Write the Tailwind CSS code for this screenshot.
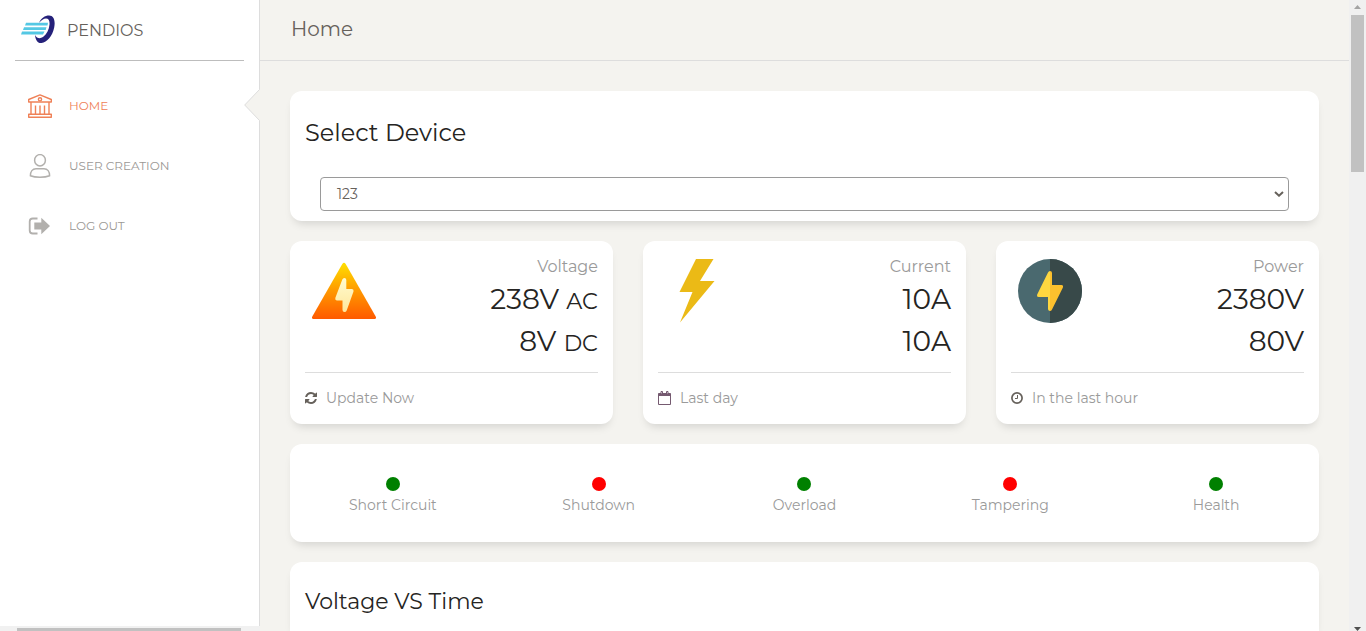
<!DOCTYPE html>
<html lang="en">
<head>
<meta charset="utf-8">
<title>Pendios</title>
<script src="https://cdn.jsdelivr.net/npm/@tailwindcss/browser@4"></script>
</head>
<body class="relative flex h-screen overflow-hidden bg-[#f4f3ef] font-[Montserrat,Inter,sans-serif] font-normal text-sm text-[#252422]">
<aside class="relative flex h-full w-[260px] shrink-0 flex-col border-r border-[#dddddd] bg-white">
  <div class="mx-[15px] flex h-[61px] w-[229px] items-center border-b border-[#bdbdbd]">
    <svg class="ml-[6px] h-[30px] w-[34px] shrink-0" viewBox="0 0 34 30">
      <path fill="#25217a" fill-rule="evenodd" d="M18 8C20 3 24 .5 28 .5c5 0 6.500 5.500 5.200 12C31.500 21 26 27.500 20.500 28c-4 .4-6-3-6.500-8 2 3.500 5 4 8 2 4-3 6-7.500 6.500-12.500.3-4-.8-6-3.500-6-2.500 0-4.500 1.500-7 4.500Z"/>
      <path fill="#54c8e4" d="M5 7.700h22l-.5 2.800H4ZM3 12.200h22.500l-.8 2.900H2ZM1 16.600h22.500l-1.500 2.900H0Z"/>
    </svg>
    <span class="ml-3 mt-[2px] text-base text-[#66615b]">PENDIOS</span>
  </div>
  <nav class="mt-[14px] flex flex-col text-xs text-[#9b9895]">
    <div class="flex h-[60px] items-center pl-[28px] text-[#ef8157]">
      <svg class="mt-px h-6 w-6" viewBox="0 0 24 24" fill="none" stroke="currentColor" stroke-width="1.400" stroke-linejoin="round"><path d="M.7 8V5.500L12 .9l11.300 4.600V8ZM3 8v12M7.500 11.500V20M12 11.500V20M16.500 11.500V20M21 8v12M.7 23.300v-3h22.600v3Z"/><circle cx="12" cy="5.300" r="1.600"/></svg>
      <span class="ml-[17px] mt-[2px]">HOME</span>
    </div>
    <div class="flex h-[60px] items-center pl-[28px]">
      <svg class="mt-px h-6 w-6" viewBox="0 0 24 24" fill="none" stroke="#b2b0ad" stroke-width="1.500"><ellipse cx="12" cy="6.300" rx="5.400" ry="5.700"/><path d="M8 14.700h8c3.500 0 5.600 3 5.600 7-5 2-14.200 2-19.200 0 0-4 2.100-7 5.600-7Z"/></svg>
      <span class="ml-[17px] mt-[2px]">USER CREATION</span>
    </div>
    <div class="flex h-[60px] items-center pl-[28px]">
      <svg class="mt-px h-6 w-6" viewBox="0 0 24 24"><path d="M9.500 4.500H4.800Q1.700 4.500 1.700 7.500v9q0 3 3.100 3h4.700" fill="none" stroke="#b2b0ad" stroke-width="1.800"/><path fill="#b2b0ad" d="M6.300 8.500h7V3.700L22 12l-8.700 8.300v-4.800h-7Z"/></svg>
      <span class="ml-[17px] mt-[2px]">LOG OUT</span>
    </div>
  </nav>
  <svg class="absolute -right-px top-[89px] h-8 w-4" viewBox="0 0 16 32"><path fill="#f4f3ef" d="M16 0 .5 16 16 32Z"/><path d="M15.500.5.700 16l14.800 15.500" fill="none" stroke="#dddddd"/></svg>
  <div class="mt-auto h-[5px] w-[260px] bg-[#f1f1f1] pl-[17px] pt-[2px]"><div class="h-[3px] w-[224px] bg-[#c1c1c1]"></div></div>
</aside>
<main class="flex h-full min-w-0 flex-1 flex-col">
  <header class="flex h-[61px] shrink-0 items-center border-b border-[#dddddd] pb-[3px] pl-[31px] text-xl text-[#66615b]">Home</header>
  <div class="flex flex-col gap-5 pl-[30px] pr-[30px] pt-[30px]">
    <section class="h-[130px] rounded-xl bg-white px-[15px] pt-[26px] shadow-[0_6px_10px_-4px_rgba(0,0,0,0.15)]">
      <h2 class="text-2xl leading-[32px]">Select Device</h2>
      <div class="mx-[15px] mt-[28px] flex h-[34px] items-center justify-between rounded border border-[#9a9a9a] pl-4 pr-[4px] text-[#66615b]">
        <span class="pb-px">123</span>
        <svg class="h-[6px] w-[10px]" viewBox="0 0 10 6" fill="none" stroke="#66615b" stroke-width="2"><path d="m1 1 4 3.700L9 1"/></svg>
      </div>
    </section>
    <div class="grid grid-cols-3 gap-[30px]">
      <section class="h-[183px] rounded-xl bg-white px-[15px] shadow-[0_6px_10px_-4px_rgba(0,0,0,0.15)]">
        <div class="flex h-[131px] justify-between pt-[15px]">
          <svg class="ml-[7px] mt-[3px] h-16 w-16" viewBox="0 0 64 64"><defs><linearGradient id="warn" x2="0" y2="1"><stop stop-color="#ffe000"/><stop offset=".5" stop-color="#ff9800"/><stop offset="1" stop-color="#ff5a00"/></linearGradient><linearGradient id="pale" x2="0" y2="1"><stop stop-color="#fffbd0"/><stop offset="1" stop-color="#ffe79c"/></linearGradient></defs><path fill="url(#warn)" d="M30.300 5q1.700-2.500 3.400 0l30 52.500q1 2.500-1.200 2.500h-61q-2.200 0-1.200-2.500Z"/><path fill="url(#pale)" d="M30.300 20.500q.6-1.500 2-1.500 2 0 2 2v9H40q2 .2 1.500 2.500l-6.800 19q-.6 1.500-2.200 1.500-2 0-2-2V41.500h-5.700q-2-.2-1.500-2.500Z"/></svg>
          <div class="text-right">
            <p class="text-base leading-[22px] text-[#9a9a9a]">Voltage</p>
            <p class="text-[28px] leading-[42px]">238V <span class="text-[22.400px] leading-none">AC</span></p>
            <p class="text-[28px] leading-[42px]">8V <span class="text-[22.400px] leading-none">DC</span></p>
          </div>
        </div>
        <div class="flex h-[51px] items-center border-t border-[#dddddd] text-[#9a9a9a]">
          <svg class="h-3 w-3" viewBox="0 0 1536 1536" fill="#66615b"><path d="M1511 928q0 5-1 7-64 268-268 434.500T764 1536q-146 0-282.500-55T238 1324l-129 129q-19 19-45 19t-45-19-19-45V960q0-26 19-45t45-19h448q26 0 45 19t19 45-19 45l-137 137q71 66 161 102t187 36q134 0 250-65t186-179q11-17 53-117 8-23 30-23h192q13 0 22.500 9.500t9.500 22.500zm25-800v448q0 26-19 45t-45 19h-448q-26 0-45-19t-19-45 19-45l138-138Q969 256 768 256q-134 0-250 65T332 500q-11 17-53 117-8 23-30 23H50q-13 0-22.500-9.500T18 608v-7q65-268 270-434.500T768 0q146 0 284 55.500T1297 212l130-129q19-19 45-19t45 19 19 45z"/></svg>
          <span class="ml-[9px] pb-px">Update Now</span>
        </div>
      </section>
      <section class="h-[183px] rounded-xl bg-white px-[15px] shadow-[0_6px_10px_-4px_rgba(0,0,0,0.15)]">
        <div class="flex h-[131px] justify-between pt-[15px]">
          <svg class="ml-[7px] mt-[3px] h-16 w-16" viewBox="0 0 64 64"><path fill="#ebba16" d="M31 0h17.500L35 22h14.500L15 63.500 27.500 33H14.500Z"/></svg>
          <div class="text-right">
            <p class="text-base leading-[22px] text-[#9a9a9a]">Current</p>
            <p class="text-[28px] leading-[42px]">10A</p>
            <p class="text-[28px] leading-[42px]">10A</p>
          </div>
        </div>
        <div class="flex h-[51px] items-center border-t border-[#dddddd] text-[#9a9a9a]">
          <svg class="h-[14px] w-[13px]" viewBox="0 0 13 14" fill="none" stroke="#755a70"><path d="M.5 3.500v10h12v-10Z"/><path fill="#755a70" d="M.5 2.500h12v2H.5Z"/><path fill="white" d="M3 .5h1.500V3H3ZM8.500.5H10V3H8.500Z"/></svg>
          <span class="ml-[9px] pb-px">Last day</span>
        </div>
      </section>
      <section class="h-[183px] rounded-xl bg-white px-[15px] shadow-[0_6px_10px_-4px_rgba(0,0,0,0.15)]">
        <div class="flex h-[131px] justify-between pt-[15px]">
          <svg class="ml-[7px] mt-[3px] h-16 w-16" viewBox="0 0 64 64"><circle cx="32" cy="32" r="32" fill="#4a696f"/><path fill="#384949" d="M32 0a32 32 0 0 1 0 64Z"/><path fill="#ffd740" d="M32 12q-1.300 0-2 1.500L19.200 35.500Q18.500 38 20.700 38H30v12.300Q30.300 52 32 52Z"/><path fill="#fcc02e" d="M32 12q2 .2 2 2v12h9.500q2.200.3 1.300 2.700L34 50.500Q33.300 52 32 52Z"/></svg>
          <div class="text-right">
            <p class="text-base leading-[22px] text-[#9a9a9a]">Power</p>
            <p class="text-[28px] leading-[42px]">2380V</p>
            <p class="text-[28px] leading-[42px]">80V</p>
          </div>
        </div>
        <div class="flex h-[51px] items-center border-t border-[#dddddd] text-[#9a9a9a]">
          <svg class="h-3 w-3" viewBox="0 0 12 12" fill="none" stroke="#66615b"><circle cx="6" cy="6" r="5.100" stroke-width="1.700"/><path d="M6.500 3v3.500H4"/></svg>
          <span class="ml-[9px] pb-px">In the last hour</span>
        </div>
      </section>
    </div>
    <section class="grid h-[98px] grid-cols-5 rounded-xl bg-white pt-[33px] text-center text-[#9a9a9a] shadow-[0_6px_10px_-4px_rgba(0,0,0,0.15)]">
      <div><div class="mx-auto h-[14px] w-[14px] rounded-full bg-[#008000]"></div><p class="mt-1 leading-5">Short Circuit</p></div>
      <div><div class="mx-auto h-[14px] w-[14px] rounded-full bg-[#ff0000]"></div><p class="mt-1 leading-5">Shutdown</p></div>
      <div><div class="mx-auto h-[14px] w-[14px] rounded-full bg-[#008000]"></div><p class="mt-1 leading-5">Overload</p></div>
      <div><div class="mx-auto h-[14px] w-[14px] rounded-full bg-[#ff0000]"></div><p class="mt-1 leading-5">Tampering</p></div>
      <div><div class="mx-auto h-[14px] w-[14px] rounded-full bg-[#008000]"></div><p class="mt-1 leading-5">Health</p></div>
    </section>
    <section class="h-[69px] shrink-0 rounded-t-xl bg-white px-[15px] pt-[24px] shadow-[0_6px_10px_-4px_rgba(0,0,0,0.15)]">
      <h2 class="text-[22px] leading-[32px]">Voltage VS Time</h2>
    </section>
  </div>
</main>
<div class="flex h-full w-[17px] shrink-0 flex-col items-center bg-[#f0f0f0]">
  <svg class="mt-[5px] h-1 w-[7px] shrink-0" viewBox="0 0 7 4"><path fill="#a3a3a3" d="M3.500 0 7 4H0Z"/></svg>
  <div class="mt-[6px] h-[157px] w-[13px] shrink-0 bg-[#c1c1c1]"></div>
  <svg class="mt-auto h-1 w-[7px] shrink-0" viewBox="0 0 7 4"><path fill="#505050" d="M0 0h7L3.500 4Z"/></svg>
</div>
</body>
</html>
